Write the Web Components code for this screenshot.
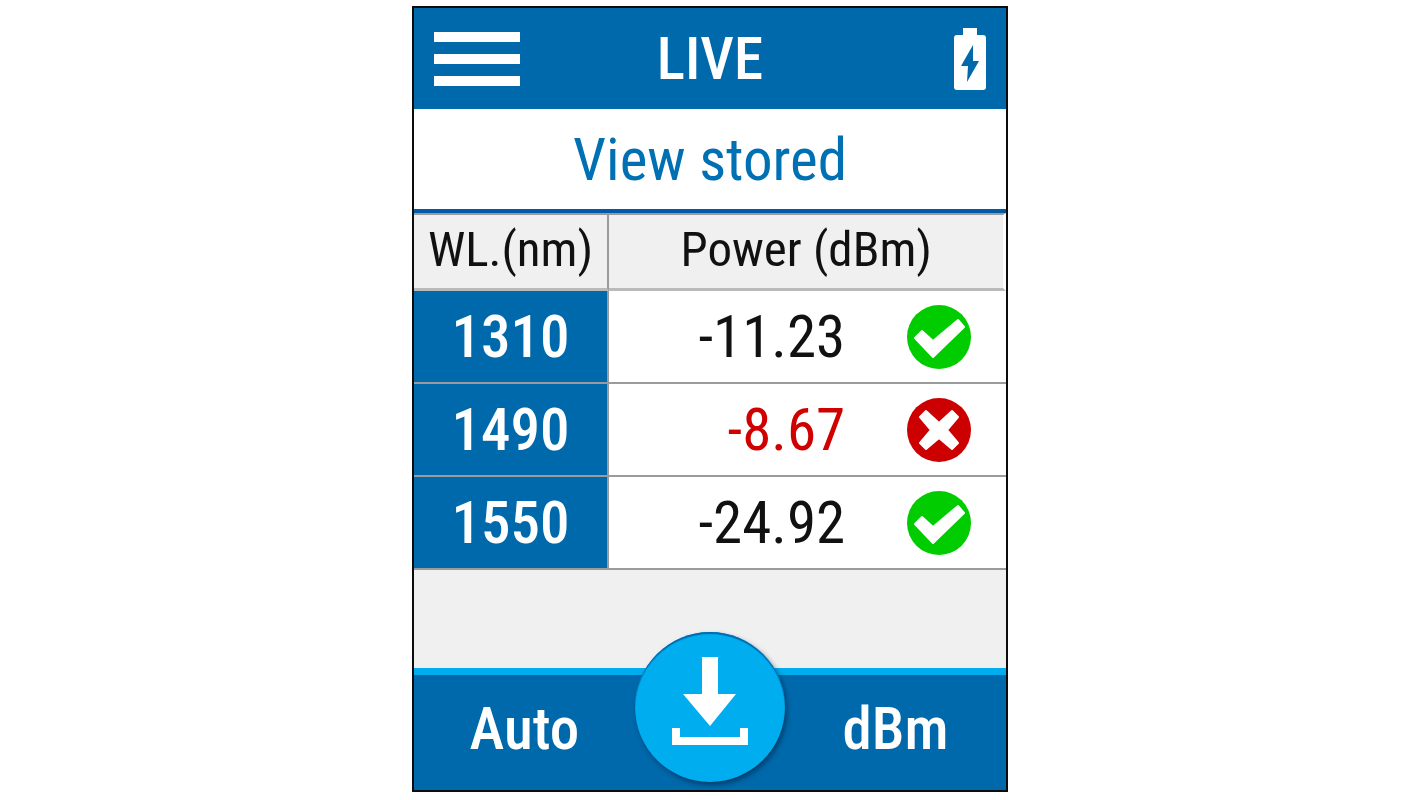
<!DOCTYPE html>
<html lang="en">
<head>
<meta charset="utf-8">
<meta name="viewport" content="width=device-width, initial-scale=1">
<title>Power meter</title>
<style>
  body {
    margin: 0;
    padding: 6px 2px 6px 0;
    background: #fff;
    font-family: "Roboto Condensed", Roboto, "Liberation Sans", sans-serif;
    font-size: 59px;
  }
</style>
</head>
<body>
<meter-screen>
  <meter-header slot="header">LIVE</meter-header>
  <meter-link slot="link" href="#stored">View stored</meter-link>
  <meter-readings></meter-readings>
  <meter-footer slot="footer">
    <span slot="left">Auto</span>
    <span slot="right">dBm</span>
  </meter-footer>
</meter-screen>

<script>
class MeterScreenElement extends HTMLElement {
  constructor() {
    super();

    this.attachShadow({ mode: "open" }).innerHTML = `
      <style>
        :host {
          --blue: #0069ab;
          --line: #9b9b9b;
          display: flex;
          flex-direction: column;
          box-sizing: border-box;
          width: 42%;
          min-width: 560px;
          margin: 0 auto;
          border: 2px solid #0c0c0c;
          background: #f0f0f0;
        }
        main {
          padding-bottom: 98px;
        }
      </style>
      <slot name="header"></slot>
      <slot name="link"></slot>
      <main><slot></slot></main>
      <slot name="footer"></slot>
    `;
  }
}

class MeterHeaderElement extends HTMLElement {
  constructor() {
    super();

    this.attachShadow({ mode: "open" }).innerHTML = `
      <style>
        :host {
          display: block;
          background: var(--blue);
          color: #fff;
        }
        header {
          display: grid;
          grid-template-columns: 1fr auto 1fr;
          align-items: center;
          height: 101px;
          padding: 0 20px;
        }
        button {
          justify-self: start;
          padding: 0;
          border: 0;
          background: none;
          color: inherit;
        }
        h1 {
          margin: 0;
          font-size: inherit;
          font-weight: 500;
        }
        svg {
          display: block;
          fill: currentColor;
        }
        .battery {
          justify-self: end;
        }
      </style>
      <header>
        <button type="button" aria-label="Menu">
          <svg width="86" height="54" viewBox="0 0 86 54">
            <path d="M0 0h86v10H0zM0 22h86v10H0zM0 44h86v10H0z"/>
          </svg>
        </button>
        <h1><slot></slot></h1>
        <svg class="battery" width="32" height="62" viewBox="0 0 32 62" role="img" aria-label="Charging">
          <path fill-rule="evenodd" d="M9 0h14v7h6q3 0 3 3v49q0 3-3 3H3q-3 0-3-3V10q0-3 3-3h6zM19 17L7 38h7l-1 16 12-21h-6z"/>
        </svg>
      </header>
    `;
  }
}

class MeterLinkElement extends HTMLElement {
  constructor() {
    super();

    this.attachShadow({ mode: "open" }).innerHTML = `
      <style>
        :host {
          display: block;
          border-bottom: 4px solid #005aa6;
          background: #fff;
        }
        a {
          display: flex;
          align-items: center;
          justify-content: center;
          height: 100px;
          color: #0070b4;
          text-decoration: none;
        }
      </style>
      <a><slot></slot></a>
    `;
    this.shadowRoot.querySelector("a").href = this.getAttribute("href");
  }
}

class MeterStatusElement extends HTMLElement {
  constructor() {
    super();

    const pass = this.getAttribute("value") === "pass";
    const mark = pass
      ? `<path d="M8 33l7-7 11 10 25-21 6 7-31 30z"/>`
      : `<path d="M19 13l13 12 13-12 6 6-11 13 11 13-6 6-13-11-13 11-6-6 11-13-11-13z"/>`;

    this.attachShadow({ mode: "open" }).innerHTML = `
      <style>
        :host {
          display: block;
        }
        svg {
          display: block;
        }
        path {
          fill: #fff;
          stroke: #fff;
          stroke-width: 2;
          stroke-linejoin: round;
        }
      </style>
      <svg width="64" height="64" viewBox="0 0 64 64" role="img" aria-label="${pass ? "Pass" : "Fail"}">
        <circle cx="32" cy="32" r="32" fill="${pass ? "#00cc00" : "#cc0000"}"/>
        ${mark}
      </svg>
    `;
  }
}

class MeterReadingsElement extends HTMLElement {
  constructor() {
    super();

    const readings = [
      { wavelength: "1310", power: "-11.23", status: "pass" },
      { wavelength: "1490", power: "-8.67", status: "fail" },
      { wavelength: "1550", power: "-24.92", status: "pass" },
    ];

    this.attachShadow({ mode: "open" }).innerHTML = `
      <style>
        :host {
          display: block;
        }
        table {
          width: 100%;
          table-layout: fixed;
          border-collapse: separate;
          border-spacing: 0;
          font-size: inherit;
          color: #111;
        }
        th, td {
          box-sizing: border-box;
          height: 93px;
          padding: 0;
          border-bottom: 2px solid var(--line);
          line-height: 60px;
        }
        th:first-child {
          width: 33%;
          border-right: 2px solid var(--line);
        }
        thead th {
          height: 78px;
          padding-bottom: 4px;
          border-top: 2px solid var(--line);
          border-bottom: 3px solid #bababa;
          background: #f0f0f0;
          font-size: 49px;
          font-weight: 400;
        }
        thead th:last-child {
          border-right: 3px solid #fff;
        }
        tbody th {
          background: var(--blue);
          color: #fff;
          font-weight: 500;
        }
        td {
          background: #fff;
        }
        .reading {
          display: flex;
          align-items: center;
          justify-content: flex-end;
          gap: 62px;
          padding-right: 35px;
        }
        .fail {
          color: #d00000;
        }
      </style>
      <table>
        <thead>
          <tr><th scope="col">WL.(nm)</th><th scope="col">Power (dBm)</th></tr>
        </thead>
        <tbody>
          ${readings.map(({ wavelength, power, status }) => `
            <tr>
              <th scope="row">${wavelength}</th>
              <td>
                <div class="reading">
                  <span class="${status}">${power}</span>
                  <meter-status value="${status}"></meter-status>
                </div>
              </td>
            </tr>
          `).join("")}
        </tbody>
      </table>
    `;
  }
}

class MeterFooterElement extends HTMLElement {
  constructor() {
    super();

    this.attachShadow({ mode: "open" }).innerHTML = `
      <style>
        :host {
          display: block;
          border-top: 7px solid #00adef;
          background: var(--blue);
        }
        footer {
          display: grid;
          grid-template-columns: 1fr 150px 1fr;
          padding-bottom: 8px;
        }
        button {
          padding: 0;
          border: 0;
          background: none;
          color: #fff;
          font: inherit;
          font-weight: 500;
        }
        /* rises out of the bar */
        .save {
          display: flex;
          align-items: center;
          justify-content: center;
          box-sizing: border-box;
          height: 150px;
          margin-top: -43px;
          padding-bottom: 12px;
          border-radius: 50%;
          background: #00adef;
          box-shadow: 2px 3px 5px rgba(0, 30, 60, 0.55), inset 0 2px 1px #0069ab;
        }
        svg {
          display: block;
          fill: currentColor;
        }
      </style>
      <footer>
        <button type="button"><slot name="left"></slot></button>
        <button type="button" class="save" aria-label="Save">
          <svg width="78" height="88" viewBox="0 0 78 88">
            <path d="M31 0h16v37h18L39 69 12 37h19zM1 71h8v9h60v-9h8v17H1z"/>
          </svg>
        </button>
        <button type="button"><slot name="right"></slot></button>
      </footer>
    `;
  }
}

window.customElements.define("meter-screen", MeterScreenElement);
window.customElements.define("meter-header", MeterHeaderElement);
window.customElements.define("meter-link", MeterLinkElement);
window.customElements.define("meter-status", MeterStatusElement);
window.customElements.define("meter-readings", MeterReadingsElement);
window.customElements.define("meter-footer", MeterFooterElement);
</script>
</body>
</html>
